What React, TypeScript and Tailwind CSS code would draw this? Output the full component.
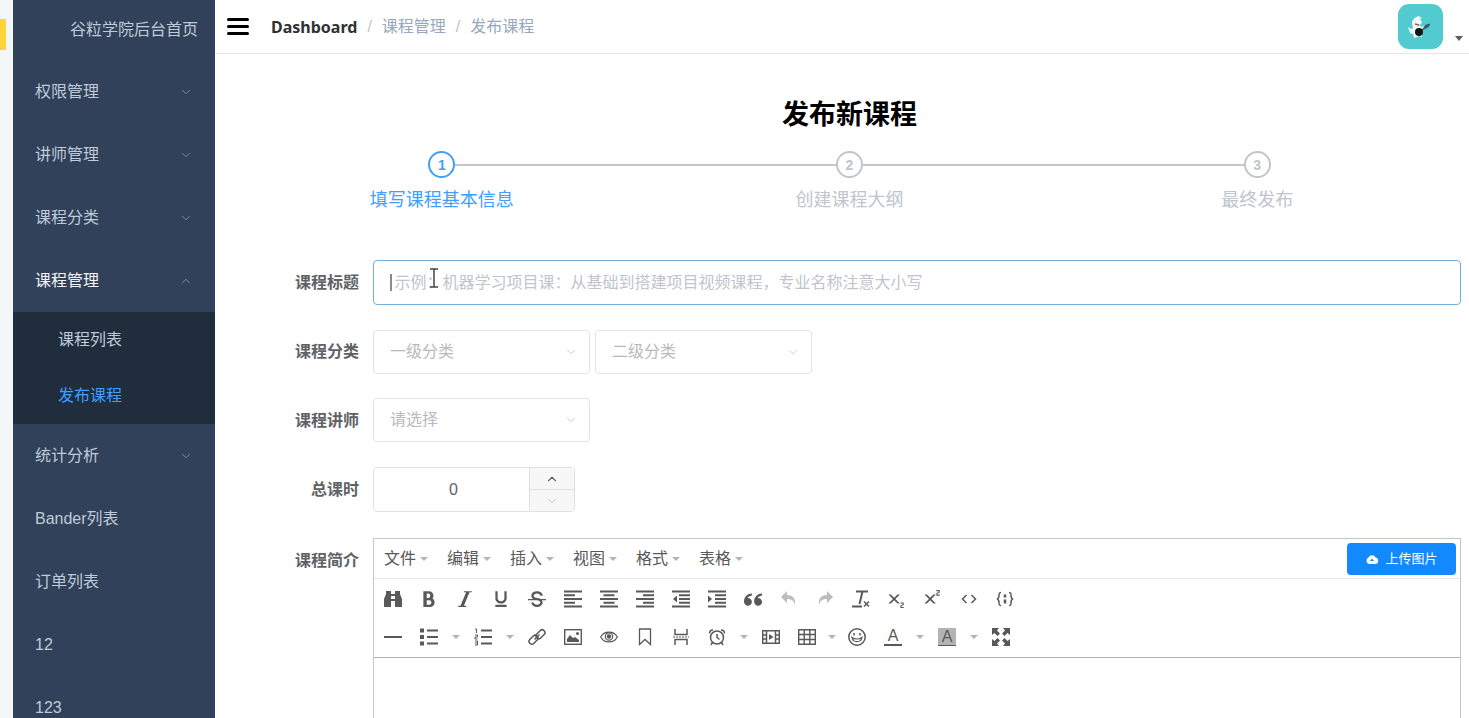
import type { ReactNode } from "react";
import { ChevronDown, ChevronUp } from "lucide-react";
import {
  ImBold,
  ImItalic,
  ImQuotesLeft,
  ImStrikethrough,
  ImSubscript,
  ImSuperscript,
  ImUnderline,
} from "react-icons/im";

type MenuItem = {
  title: string;
  arrow?: boolean;
  children?: { title: string; active?: boolean }[];
};

const menu: MenuItem[] = [
  { title: "权限管理", arrow: true },
  { title: "讲师管理", arrow: true },
  { title: "课程分类", arrow: true },
  {
    title: "课程管理",
    arrow: true,
    children: [{ title: "课程列表" }, { title: "发布课程", active: true }],
  },
  { title: "统计分析", arrow: true },
  { title: "Bander列表" },
  { title: "订单列表" },
  { title: "12" },
  { title: "123" },
];

const steps = ["填写课程基本信息", "创建课程大纲", "最终发布"];
const editorMenus = ["文件", "编辑", "插入", "视图", "格式", "表格"];

const labelClass =
  "w-[135px] h-[45px] shrink-0 flex items-center justify-end pr-[14px] font-bold text-[#606266]";

function Svg({ children }: { children: ReactNode }) {
  return (
    <svg
      viewBox="0 0 18 18"
      className="size-[18px]"
      fill="none"
      stroke="currentColor"
      strokeWidth="1.5"
    >
      {children}
    </svg>
  );
}

function Caret() {
  return (
    <span className="border-x-4 border-t-4 border-x-transparent border-t-[#b5b5b5]" />
  );
}

function Tool({
  name,
  children,
  disabled,
}: {
  name: string;
  children: ReactNode;
  disabled?: boolean;
}) {
  return (
    <button
      type="button"
      aria-label={name}
      disabled={disabled}
      className="w-9 h-[38px] flex items-center justify-center text-[18px] disabled:opacity-40"
    >
      {children}
    </button>
  );
}

function MoreTool({ name }: { name: string }) {
  return (
    <button
      type="button"
      aria-label={name}
      className="w-[18px] h-[38px] flex items-center justify-center"
    >
      <Caret />
    </button>
  );
}

function Select({ id, placeholder }: { id: string; placeholder: string }) {
  return (
    <div className="relative w-[217px]">
      <select
        id={id}
        aria-label={placeholder}
        className="appearance-none w-full h-11 pl-4 pr-8 rounded-[4px] border border-[#e2e3e6] bg-white text-[#b8babd]"
      >
        <option>{placeholder}</option>
      </select>
      <ChevronDown
        className="absolute right-3 top-[15px] size-[14px] text-[#c0c4cc] pointer-events-none"
        strokeWidth={1.5}
      />
    </div>
  );
}

function Sidebar() {
  return (
    <nav className="w-[202px] shrink-0 bg-[#304159] text-[#bfcbd9] overflow-hidden">
      <a href="#" className="flex items-center h-[60px] pl-[57px]">
        谷粒学院后台首页
      </a>
      <ul>
        {menu.map((item) => (
          <li key={item.title}>
            <a
              href="#"
              className={
                item.children
                  ? "flex items-center justify-between h-[63px] px-[22px] text-[#f4f4f5]"
                  : "flex items-center justify-between h-[63px] px-[22px]"
              }
            >
              {item.title}
              {item.arrow &&
                (item.children ? (
                  <ChevronUp className="size-[14px] text-[#8795a8]" strokeWidth={1.5} />
                ) : (
                  <ChevronDown className="size-[14px] text-[#8795a8]" strokeWidth={1.5} />
                ))}
            </a>
            {item.children && (
              <ul className="bg-[#1f2d3d]">
                {item.children.map((child) => (
                  <li key={child.title}>
                    <a
                      href="#"
                      className={
                        child.active
                          ? "flex items-center h-14 pl-[45px] text-[#409eff]"
                          : "flex items-center h-14 pl-[45px]"
                      }
                    >
                      {child.title}
                    </a>
                  </li>
                ))}
              </ul>
            )}
          </li>
        ))}
      </ul>
    </nav>
  );
}

function Navbar() {
  return (
    <header className="flex items-center h-[54px] shrink-0 border-b border-[#e4e5e8] pl-3">
      <button type="button" aria-label="menu" className="flex flex-col gap-1 w-[22px]">
        <span className="h-[3px] w-full rounded-sm bg-black" />
        <span className="h-[3px] w-full rounded-sm bg-black" />
        <span className="h-[3px] w-full rounded-sm bg-black" />
      </button>
      <div className="flex items-center gap-[10px] ml-[22px] text-[#97a8be]">
        <a href="#" className="font-['Noto_Sans'] font-bold text-[#303133]">
          Dashboard
        </a>
        <span className="text-[#c0c4cc]">/</span>
        <span>课程管理</span>
        <span className="text-[#c0c4cc]">/</span>
        <span>发布课程</span>
      </div>
      <button type="button" aria-label="user" className="ml-auto flex items-end gap-3 pr-1.5">
        <svg viewBox="0 0 45 45" className="size-[45px] rounded-[11px] bg-[#51cad0]">
          <path
            d="M14 19c0-3 3-6 7-7l1 1 2 1-2 1 2 3-1 2-2 1 3 2 2-1 1 1-3 4v6l-3-1-2 1-3 1-1-4-3-1-2-6 3 2 2-1z"
            fill="#eef8f8"
          />
          <path d="M17 20l4 1" stroke="#a05048" strokeWidth="1.5" />
          <path d="M24 26l4-5 4-1-2 3z" fill="#33606a" stroke="#33606a" />
          <circle cx="21" cy="28" r="4" fill="#0c1518" />
        </svg>
        <span className="mb-2 border-x-4 border-t-[5px] border-x-transparent border-t-[#5a5e66]" />
      </button>
    </header>
  );
}

function Steps() {
  return (
    <ol className="flex mt-[18px]">
      {steps.map((title, i) => (
        <li
          key={title}
          className={
            i === 0
              ? "flex-1 flex flex-col items-center text-[#409eff]"
              : "flex-1 flex flex-col items-center text-[#c0c4cc]"
          }
        >
          <div className="flex items-center w-full">
            <span className={i === 0 ? "flex-1" : "flex-1 h-[2px] bg-[#c4c6c9]"} />
            <span className="size-[27px] rounded-full border-2 border-current flex items-center justify-center text-[14px] font-bold">
              {i + 1}
            </span>
            <span className={i === 2 ? "flex-1" : "flex-1 h-[2px] bg-[#c4c6c9]"} />
          </div>
          <span className="mt-[9px] text-[18px] leading-[26px]">{title}</span>
        </li>
      ))}
    </ol>
  );
}

function Toolbar() {
  return (
    <div className="py-px pl-px border-b border-[#b0b0b0] text-[#595959]">
      <div className="flex">
        <Tool name="查找">
          <Svg>
            <path
              d="M2 4V1h5v3h4V1h5v3l2 5v8h-7v-6H7v6H0V9zM7 6v3h4V6z"
              fill="currentColor"
              fillRule="evenodd"
              stroke="none"
            />
          </Svg>
        </Tool>
        <Tool name="粗体"><ImBold /></Tool>
        <Tool name="斜体"><ImItalic /></Tool>
        <Tool name="下划线"><ImUnderline /></Tool>
        <Tool name="删除线"><ImStrikethrough /></Tool>
        <Tool name="左对齐">
          <Svg><path d="M0 1.5h18M0 5.3h11M0 9h18M0 12.8h11M0 16.5h18" strokeWidth="2" /></Svg>
        </Tool>
        <Tool name="居中">
          <Svg><path d="M0 1.5h18M3.5 5.3h11M0 9h18M3.5 12.8h11M0 16.5h18" strokeWidth="2" /></Svg>
        </Tool>
        <Tool name="右对齐">
          <Svg><path d="M0 1.5h18M7 5.3h11M0 9h18M7 12.8h11M0 16.5h18" strokeWidth="2" /></Svg>
        </Tool>
        <Tool name="减少缩进">
          <Svg>
            <path d="M0 1.5h18M7 5.3h11M7 9h11M7 12.8h11M0 16.5h18" strokeWidth="2" />
            <path d="M5 5.5v7L1 9z" fill="currentColor" stroke="none" />
          </Svg>
        </Tool>
        <Tool name="增加缩进">
          <Svg>
            <path d="M0 1.5h18M7 5.3h11M7 9h11M7 12.8h11M0 16.5h18" strokeWidth="2" />
            <path d="M0 5.5v7L4 9z" fill="currentColor" stroke="none" />
          </Svg>
        </Tool>
        <Tool name="引用"><ImQuotesLeft /></Tool>
        <Tool name="撤销" disabled>
          <Svg>
            <path d="M7 1v4c5 0 9 3 8 10-1-4-3-6-8-6v4L1 7z" fill="currentColor" stroke="none" />
          </Svg>
        </Tool>
        <Tool name="重做" disabled>
          <Svg>
            <path d="M11 1v4c-5 0-9 3-8 10 1-4 3-6 8-6v4l6-6z" fill="currentColor" stroke="none" />
          </Svg>
        </Tool>
        <Tool name="清除格式">
          <Svg>
            <path d="M4 1.5h12M10.5 1.5L7.5 14M0 16.5h10" strokeWidth="2" />
            <path d="M12 11.5l5 5M17 11.5l-5 5" />
          </Svg>
        </Tool>
        <Tool name="下标"><ImSubscript /></Tool>
        <Tool name="上标"><ImSuperscript /></Tool>
        <Tool name="源代码">
          <Svg><path d="M6.5 5L2.5 9l4 4M11.500 5l4 4-4 4" /></Svg>
        </Tool>
        <Tool name="代码示例">
          <Svg>
            <path d="M5 2.5C3 2.5 3 3.500 3 5.500S3 8.500 1 9c2 .5 2 1.500 2 3.500s0 3 2 3M13 2.500c2 0 2 1 2 3s0 3 2 3.500c-2 .5-2 1.500-2 3.500s0 3-2 3" />
            <path d="M9 4.500v3M9 9.500v4" strokeWidth="2.500" />
          </Svg>
        </Tool>
      </div>
      <div className="flex">
        <Tool name="水平线"><Svg><path d="M0 9h18" strokeWidth="2" /></Svg></Tool>
        <Tool name="项目符号">
          <Svg>
            <path d="M0 2.500h4M0 9h4M0 15.500h4" strokeWidth="4" />
            <path d="M7 2.500h11M7 9h11M7 15.500h11" strokeWidth="2" />
          </Svg>
        </Tool>
        <MoreTool name="更多项目符号" />
        <Tool name="编号列表">
          <Svg>
            <path d="M7 2.500h11M7 9h11M7 15.500h11" strokeWidth="2" />
            <path d="M1 1h1.500v4M1 7h2.500v2H1v2h2.500M1 13h2.500v4H1M1 15h2" strokeWidth="1" />
          </Svg>
        </Tool>
        <MoreTool name="更多编号列表" />
        <Tool name="链接">
          <Svg>
            <rect x="7.500" y="3.500" width="10" height="5.500" rx="2.500" transform="rotate(-45 12.500 6.250)" />
            <rect x="0.500" y="9" width="10" height="5.500" rx="2.500" transform="rotate(-45 5.500 11.750)" />
            <path d="M6.500 11.500l5-5" />
          </Svg>
        </Tool>
        <Tool name="图片">
          <Svg>
            <rect x="0.700" y="1.700" width="16.600" height="14.600" strokeWidth="1.400" />
            <path d="M3 14v-3l3-4 3 3 2-1 4 3v2z" fill="currentColor" stroke="none" />
            <circle cx="13.500" cy="5.500" r="1.500" fill="currentColor" stroke="none" />
          </Svg>
        </Tool>
        <Tool name="预览">
          <Svg>
            <path d="M.7 9C4 2.500 14 2.500 17.300 9 14 15.500 4 15.500.7 9z" strokeWidth="1.200" />
            <circle cx="9" cy="8.500" r="3.700" strokeWidth="1.200" />
            <circle cx="9" cy="8.500" r="2.200" fill="currentColor" stroke="none" />
          </Svg>
        </Tool>
        <Tool name="书签">
          <Svg><path d="M3.500 1h11v15.500L9 11.500l-5.500 5z" strokeWidth="1.300" /></Svg>
        </Tool>
        <Tool name="分页符">
          <Svg>
            <path d="M3 1v5.500h12V1M3 17v-5.500h12V17" />
            <path d="M1 9h16" strokeWidth="1" strokeDasharray="2 1" />
          </Svg>
        </Tool>
        <Tool name="日期时间">
          <Svg>
            <circle cx="9" cy="9.500" r="6.500" />
            <path d="M9 6v3.500l2.500 2M1.500 5.500c0-2 1.500-3.500 3.500-3.500M16.500 5.500c0-2-1.500-3.500-3.500-3.500M4.500 14.500L3 17M13.500 14.500L15 17" />
          </Svg>
        </Tool>
        <MoreTool name="更多日期时间" />
        <Tool name="媒体">
          <Svg>
            <path d="M.7 2.700h16.600v12.600H.7zM4.500 3v12M13.500 3v12M.7 7h3.800M.7 11h3.800M13.500 7h3.800M13.500 11h3.800" />
            <path d="M7 6v6l4.500-3z" fill="currentColor" stroke="none" />
          </Svg>
        </Tool>
        <Tool name="表格">
          <Svg>
            <path d="M.7 1.700h16.600v14.600H.7zM.7 6.500h16.600M.7 11.500h16.600M6.200 1.700v14.600M11.800 1.700v14.600" strokeWidth="1.400" />
          </Svg>
        </Tool>
        <button type="button" aria-label="表格选项" className="w-[14px] flex items-center justify-center">
          <Caret />
        </button>
        <Tool name="表情">
          <Svg>
            <circle cx="9" cy="9" r="8.200" />
            <path d="M4 9.500c1 5.500 9 5.500 10 0-2 2-8 2-10 0z" strokeWidth="1.200" />
            <path d="M6 5v2.500M12 5v2.500" />
          </Svg>
        </Tool>
        <Tool name="文字颜色">
          <span className="w-[18px] h-[18px] border-b-2 border-current text-[16px] leading-4">A</span>
        </Tool>
        <MoreTool name="更多文字颜色" />
        <Tool name="背景颜色">
          <span className="w-[18px] h-[18px] bg-[#b3b3b3] border-b border-current text-[16px] leading-[18px]">A</span>
        </Tool>
        <MoreTool name="更多背景颜色" />
        <Tool name="全屏">
          <Svg>
            <path
              d="M0 0h7L5 2.500 8 5.500 5.500 8 2.500 5 0 7zM18 0v7l-2.500-2-3 3L10 5.500l3-3L11 0zM0 18v-7l2.500 2 3-3L8 12.500l-3 3L7 18zM18 18h-7l2-2.500-3-3 2.500-2.500 3 3 2.500-2z"
              fill="currentColor"
              stroke="none"
            />
          </Svg>
        </Tool>
      </div>
    </div>
  );
}

function Editor() {
  return (
    <div className="flex-1 flex flex-col border border-[#c5c5c5]">
      <div className="flex items-center h-10 border-b border-[#e8e8e8] text-[#595959]">
        {editorMenus.map((title) => (
          <button key={title} type="button" className="flex items-center gap-1 w-[63px] pl-[10px]">
            {title}
            <Caret />
          </button>
        ))}
        <button
          type="button"
          className="ml-auto mr-1 w-[109px] h-8 rounded-[4px] bg-[#1389ff] text-white text-[13px] flex items-center justify-center gap-1.5"
        >
          <svg viewBox="0 0 14 14" className="size-[14px]">
            <path d="M4 12a3.500 3.500 0 0 1-.5-6.500 4 4 0 0 1 7.200 0A3.300 3.300 0 0 1 10 12z" fill="#fff" />
            <path d="M7 6.500l2 2.500H5z" fill="#1389ff" />
          </svg>
          上传图片
        </button>
      </div>
      <Toolbar />
      <textarea id="description" className="flex-1 w-full p-3 resize-none outline-none" />
    </div>
  );
}

export default function App() {
  return (
    <div className="h-screen flex overflow-hidden bg-white text-[16px] leading-6 font-['Liberation_Sans','Noto_Sans_CJK_SC',sans-serif]">
      <div className="w-[13px] shrink-0 bg-[#f4f7f7] pt-[19px]">
        <div className="w-1.5 h-[31px] bg-[#ffd43a]" />
      </div>
      <Sidebar />
      <div className="flex-1 min-w-0 flex flex-col">
        <Navbar />
        <main className="flex-1 flex flex-col pt-[43px] pl-[23px] pr-2">
          <h2 className="text-center text-[27px] leading-9 font-bold text-black">发布新课程</h2>
          <Steps />
          <form className="flex-1 flex flex-col gap-6 mt-[47px]">
            <div className="flex">
              <label htmlFor="title" className={labelClass}>课程标题</label>
              <div className="relative flex-1">
                <input
                  id="title"
                  type="text"
                  placeholder=" 示例：机器学习项目课：从基础到搭建项目视频课程，专业名称注意大小写"
                  className="block w-full h-[45px] px-4 rounded-[4px] border border-[#6fb0dc] outline-none placeholder:text-[#c0c4cc]"
                />
                <span className="absolute left-[17px] top-[14px] w-[2px] h-[17px] bg-[#8b8b8b]" />
                {/* mouse pointer */}
                <svg
                  viewBox="0 0 10 20"
                  className="absolute left-14 top-2 w-[10px] h-5"
                  fill="none"
                  stroke="#444"
                  strokeWidth="1.500"
                >
                  <path d="M1 1h8M5 1v18M1 19h8" />
                </svg>
              </div>
            </div>
            <div className="flex">
              <label htmlFor="subject" className={labelClass}>课程分类</label>
              <div className="flex items-center gap-[5px]">
                <Select id="subject" placeholder="一级分类" />
                <Select id="subject-child" placeholder="二级分类" />
              </div>
            </div>
            <div className="flex">
              <label htmlFor="teacher" className={labelClass}>课程讲师</label>
              <Select id="teacher" placeholder="请选择" />
            </div>
            <div className="flex">
              <label htmlFor="lessons" className={labelClass}>总课时</label>
              <div className="flex w-[202px] h-[45px] rounded-[4px] border border-[#e0e1e5] overflow-hidden">
                <input
                  id="lessons"
                  type="text"
                  defaultValue="0"
                  className="flex-1 min-w-0 pl-1 text-center text-[#606266] outline-none"
                />
                <div className="w-[45px] flex flex-col border-l border-[#e0e1e5] bg-[#f7f7f8]">
                  <button
                    type="button"
                    aria-label="增加"
                    className="flex-1 flex items-center justify-center border-b border-[#e0e1e5] text-[#606266]"
                  >
                    <ChevronUp className="size-[14px]" strokeWidth={2} />
                  </button>
                  <button
                    type="button"
                    aria-label="减少"
                    className="flex-1 flex items-center justify-center text-[#c0c4cc]"
                  >
                    <ChevronDown className="size-[14px]" strokeWidth={1.5} />
                  </button>
                </div>
              </div>
            </div>
            <div className="flex-1 flex pt-0.5">
              <label htmlFor="description" className={labelClass}>课程简介</label>
              <Editor />
            </div>
          </form>
        </main>
      </div>
    </div>
  );
}
